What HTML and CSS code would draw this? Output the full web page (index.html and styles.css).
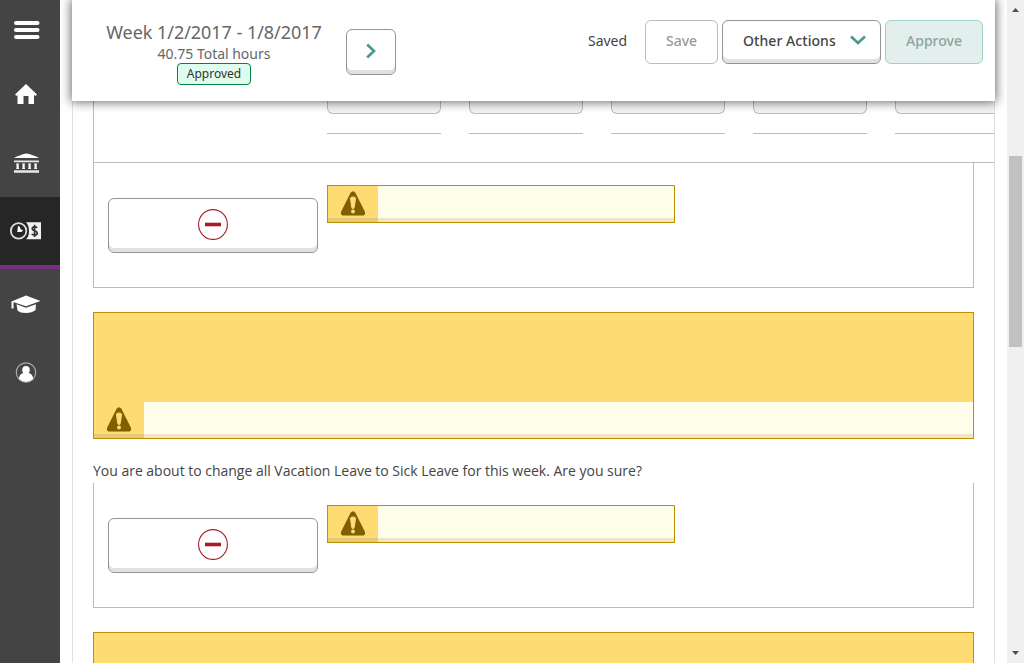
FILE: index.html
```html
<!DOCTYPE html>
<html lang="en">
<head>
<meta charset="utf-8">
<title>Timesheet</title>
<link rel="stylesheet" href="styles.css">
</head>
<body>
<svg class="defs" width="0" height="0">
  <symbol id="warning" viewBox="0 0 26 26">
    <path d="M10.600 1.700Q13-1.300 15.400 1.700L24.800 20.500Q26 24.500 22 24.500H4Q0 24.500 1.200 20.500Z" fill="#7f5f00"/>
    <path d="M10 8Q10 5.500 13 5.500T16 8L14.700 16.500Q14.500 17.900 13 17.900T11.300 16.500Z" fill="#fedb73"/>
    <circle cx="13" cy="20.500" r="2" fill="#fedb73"/>
  </symbol>
  <symbol id="minus" viewBox="0 0 30 31">
    <ellipse cx="15" cy="15.500" rx="14.400" ry="14.900" fill="none" stroke="#a61e22" stroke-width="1.100"/>
    <path d="M7 15.500H23" stroke="#a61e22" stroke-width="3.600"/>
  </symbol>
</svg>
<div class="app">
  <nav class="sidebar">
    <a class="nav-item menu"><svg width="26" height="18" viewBox="0 0 26 18"><g fill="#fff"><rect width="25.500" height="4" rx="2"/><rect y="7" width="25.500" height="4" rx="2"/><rect y="14" width="25.500" height="4" rx="2"/></g></svg></a>
    <a class="nav-item home"><svg width="22" height="20" viewBox="0 0 22 20"><path d="M11 0L22 10.500L20.500 12L19 11V20H13.500V12H8.500V20H2.500V11L1.500 12L0 10.500Z" fill="#fff"/></svg></a>
    <a class="nav-item bank"><svg width="25" height="20" viewBox="0 0 25 20"><path d="M0 5Q2 3.500 7 2Q12.500-1 18 2Q23 3.500 25 5Z" fill="#fff"/><path d="M0 7.500H25V9.300H0ZM0 17.300H25V19.700H0Z" fill="#e8e8e8"/><path d="M2 10.500H5.200L4.700 11.500V15L5.200 16H2L2.500 15V11.500ZM8 10.500H11.200L10.700 11.500V15L11.200 16H8L8.500 15V11.500ZM14 10.500H17.200L16.700 11.500V15L17.200 16H14L14.500 15V11.500ZM20 10.500H23.200L22.700 11.500V15L23.200 16H20L20.500 15V11.500Z" fill="#fff"/></svg></a>
    <a class="nav-item time active"><svg width="32" height="18" viewBox="0 0 32 18"><path d="M16 .2H31V17.200H16Q19 14.500 19 9T16 .2Z" fill="#f2f2f2"/><circle cx="8.600" cy="8.900" r="7.700" fill="none" stroke="#ddd" stroke-width="1.800"/><path d="M8 3.700Q10.500 4.300 10.600 7.300L13 8.300Q12.500 10 10.500 10H7.300Z" fill="#fff"/><path d="M27.200 5.700Q26.500 4.800 24.600 4.800Q22.200 4.800 22.200 6.800C22.200 9.300 27.300 8.300 27.300 11Q27.300 13 24.700 13Q22.700 13 21.700 12M24.600 2.800V15" fill="none" stroke="#333" stroke-width="1.700"/></svg></a>
    <a class="nav-item cap"><svg width="30" height="19" viewBox="0 0 30 19"><path d="M.5 6.500L15 .5L29.500 6L15 11.200Z" fill="#fff"/><path d="M5.500 9.300L15 12.700L25 9.300L24.500 15Q21 18 15 18T6.500 15.500Z" fill="#fff"/><path d="M1.500 6.500V13.500" stroke="#fff" stroke-width="2"/></svg></a>
    <a class="nav-item user"><svg width="22" height="21" viewBox="0 0 22 21"><circle cx="11" cy="10.500" r="9.700" fill="none" stroke="#aaa" stroke-width="1.200"/><path d="M11 4Q14.800 4 14.800 8Q14.800 10 13.700 11Q18 12 18 17Q14.500 20 11 20T4 17Q4 12 8.300 11Q7.200 10 7.200 8Q7.200 4 11 4Z" fill="#fff"/></svg></a>
  </nav>

  <div class="page">
    <header class="topbar">
      <div class="summary">
        <div class="week">Week 1/2/2017 - 1/8/2017</div>
        <div class="hours">40.75 Total hours</div>
        <span class="badge">Approved</span>
      </div>
      <button class="btn raised next"><svg width="12" height="16" viewBox="0 0 12 16"><path d="M2.200 1.500L9 8L2.200 14.500" fill="none" stroke="#4a998c" stroke-width="2.700"/></svg></button>
      <div class="actions">
        <span class="saved">Saved</span>
        <button class="btn save">Save</button>
        <button class="btn raised other">Other Actions<svg width="16" height="10" viewBox="0 0 16 10"><path d="M1 1.500L8 8L15 1.500" fill="none" stroke="#4a998c" stroke-width="2.700"/></svg></button>
        <button class="btn approve">Approve</button>
      </div>
    </header>

    <main class="panel">
      <section class="days">
        <div class="day"></div><div class="day"></div><div class="day"></div><div class="day"></div><div class="day"></div>
      </section>
      <section class="entry">
        <button class="btn raised remove"><svg width="30" height="31"><use href="#minus"/></svg></button>
        <div class="alert"><div class="alert-icon"><svg width="26" height="26"><use href="#warning"/></svg></div><div class="alert-body"></div></div>
      </section>
      <div class="alert large"><div class="alert-icon"><svg width="26" height="26"><use href="#warning"/></svg></div><div class="alert-body"></div></div>
      <p class="confirm">You are about to change all Vacation Leave to Sick Leave for this week. Are you sure?</p>
      <section class="entry">
        <button class="btn raised remove"><svg width="30" height="31"><use href="#minus"/></svg></button>
        <div class="alert"><div class="alert-icon"><svg width="26" height="26"><use href="#warning"/></svg></div><div class="alert-body"></div></div>
      </section>
      <div class="alert large"></div>
    </main>
  </div>

  <div class="scrollbar">
    <svg width="7" height="4" viewBox="0 0 7 4"><path d="M0 4L3.500 0L7 4Z" fill="#505050"/></svg>
    <div class="thumb"></div>
    <svg width="7" height="4" viewBox="0 0 7 4"><path d="M0 0L3.500 4L7 0Z" fill="#505050"/></svg>
  </div>
</div>
</body>
</html>
```
FILE: styles.css
```css
* { box-sizing: border-box; }
body { margin: 0; font: 14px/20px "Noto Sans", sans-serif; color: #444; background: #fff; }
svg { display: block; flex: none; }
.defs { position: absolute; }
.app { display: flex; width: 1024px; height: 663px; overflow: hidden; }

.sidebar { flex: none; width: 60px; background: #444; }
.nav-item { display: flex; align-items: center; padding-left: 14px; height: 68px; }
.menu { height: 60px; }
.home { padding-left: 15px; }
.bank { height: 69px; }
.active { height: 72px; padding-left: 10px; padding-bottom: 1px; background: #262626; border-bottom: 4px solid #782f86; }
.cap { padding-left: 11px; height: 70px; }
.user { padding-left: 15px; height: 66px; }

.page { display: flex; flex-direction: column; width: 923px; margin-left: 12px; }
.topbar { position: relative; z-index: 2; flex: none; display: flex; align-items: flex-start; height: 101px; padding-left: 34px; background: #fff; box-shadow: 0 0 10px 1px rgba(0,0,0,.6); clip-path: inset(0 -12px -18px -12px); }
.summary { width: 216px; padding-top: 20px; text-align: center; color: #666; white-space: nowrap; }
.week { font-size: 18px; line-height: 24px; letter-spacing: -.04px; }
.hours { padding-top: 1px; line-height: 18px; letter-spacing: -.02px; }
.badge { display: block; width: 74px; height: 22px; margin: 0 auto; border: 1px solid #008542; border-radius: 4px; background: #dffcee; color: #333; font-size: 12px; line-height: 19px; }
.btn { display: flex; align-items: center; justify-content: center; margin: 0; padding: 0; border: 1px solid #949494; border-radius: 6px; background: #fff; color: #444; font: 500 14px/20px "Noto Sans", sans-serif; }
.raised { box-shadow: inset 0 -4px #e1e1e1; }
.next { width: 50px; height: 46px; margin: 29px 0 0 24px; padding-bottom: 2px; }
.actions { display: flex; align-items: center; margin: 20px 12px 0 auto; }
.actions .btn { height: 44px; padding-bottom: 2px; }
.saved { margin-right: 18px; padding-bottom: 2px; letter-spacing: -.05px; }
.save { width: 73px; margin-right: 4px; border-color: #bbb; color: #999; }
.actions .other { justify-content: flex-start; width: 159px; margin-right: 4px; padding-left: 20px; gap: 14px; letter-spacing: .06px; }
.other svg { margin-top: -3px; }
.approve { width: 98px; border-color: #a2cfc7; background: #e2efec; color: #8da49f; }

.panel { flex: 1; min-height: 0; padding-left: 20px; border: solid #e0e0e0; border-width: 0 1px; overflow: hidden; }
.days { display: flex; gap: 28px; height: 62px; padding-left: 233px; border-left: 1px solid #bbb; border-bottom: 1px solid #bbb; overflow: hidden; }
.day { flex: none; width: 114px; height: 33px; border-bottom: 1px solid #bbb; }
.day::before { content: ""; display: block; height: 12px; border: 1px solid #bbb; border-top: 0; border-radius: 0 0 6px 6px; background: #f4f4f4; }
.entry { display: flex; align-items: flex-start; width: 881px; height: 125px; padding: 22px 0 0 14px; border: 1px solid #bbb; border-top: 0; }
.remove { width: 210px; height: 55px; margin: 13px 9px 0 0; padding-bottom: 2px; }
.alert { display: flex; width: 348px; height: 38px; border: 1px solid #bf9000; background: #fedb73; background-image: linear-gradient(#e5c977, #e5c977); background-repeat: no-repeat; background-position: bottom; background-size: 100% 4px; }
.alert-icon { display: flex; justify-content: center; width: 50px; padding-top: 5px; }
.alert-body { flex: 1; background: #fffeea; border-bottom: 4px solid #ece5c6; }
.large { width: 881px; height: 127px; margin-top: 24px; padding-top: 89px; }
.confirm { height: 44px; margin: 0; padding-top: 22px; font-family: "Open Sans", sans-serif; letter-spacing: -.014px; white-space: nowrap; }

.scrollbar { display: flex; flex-direction: column; align-items: center; width: 17px; margin-left: auto; padding: 8px 0; background: #f0f0f0; }
.thumb { width: 13px; height: 191px; margin: 144px 0 auto; background: #c1c1c1; }
```
